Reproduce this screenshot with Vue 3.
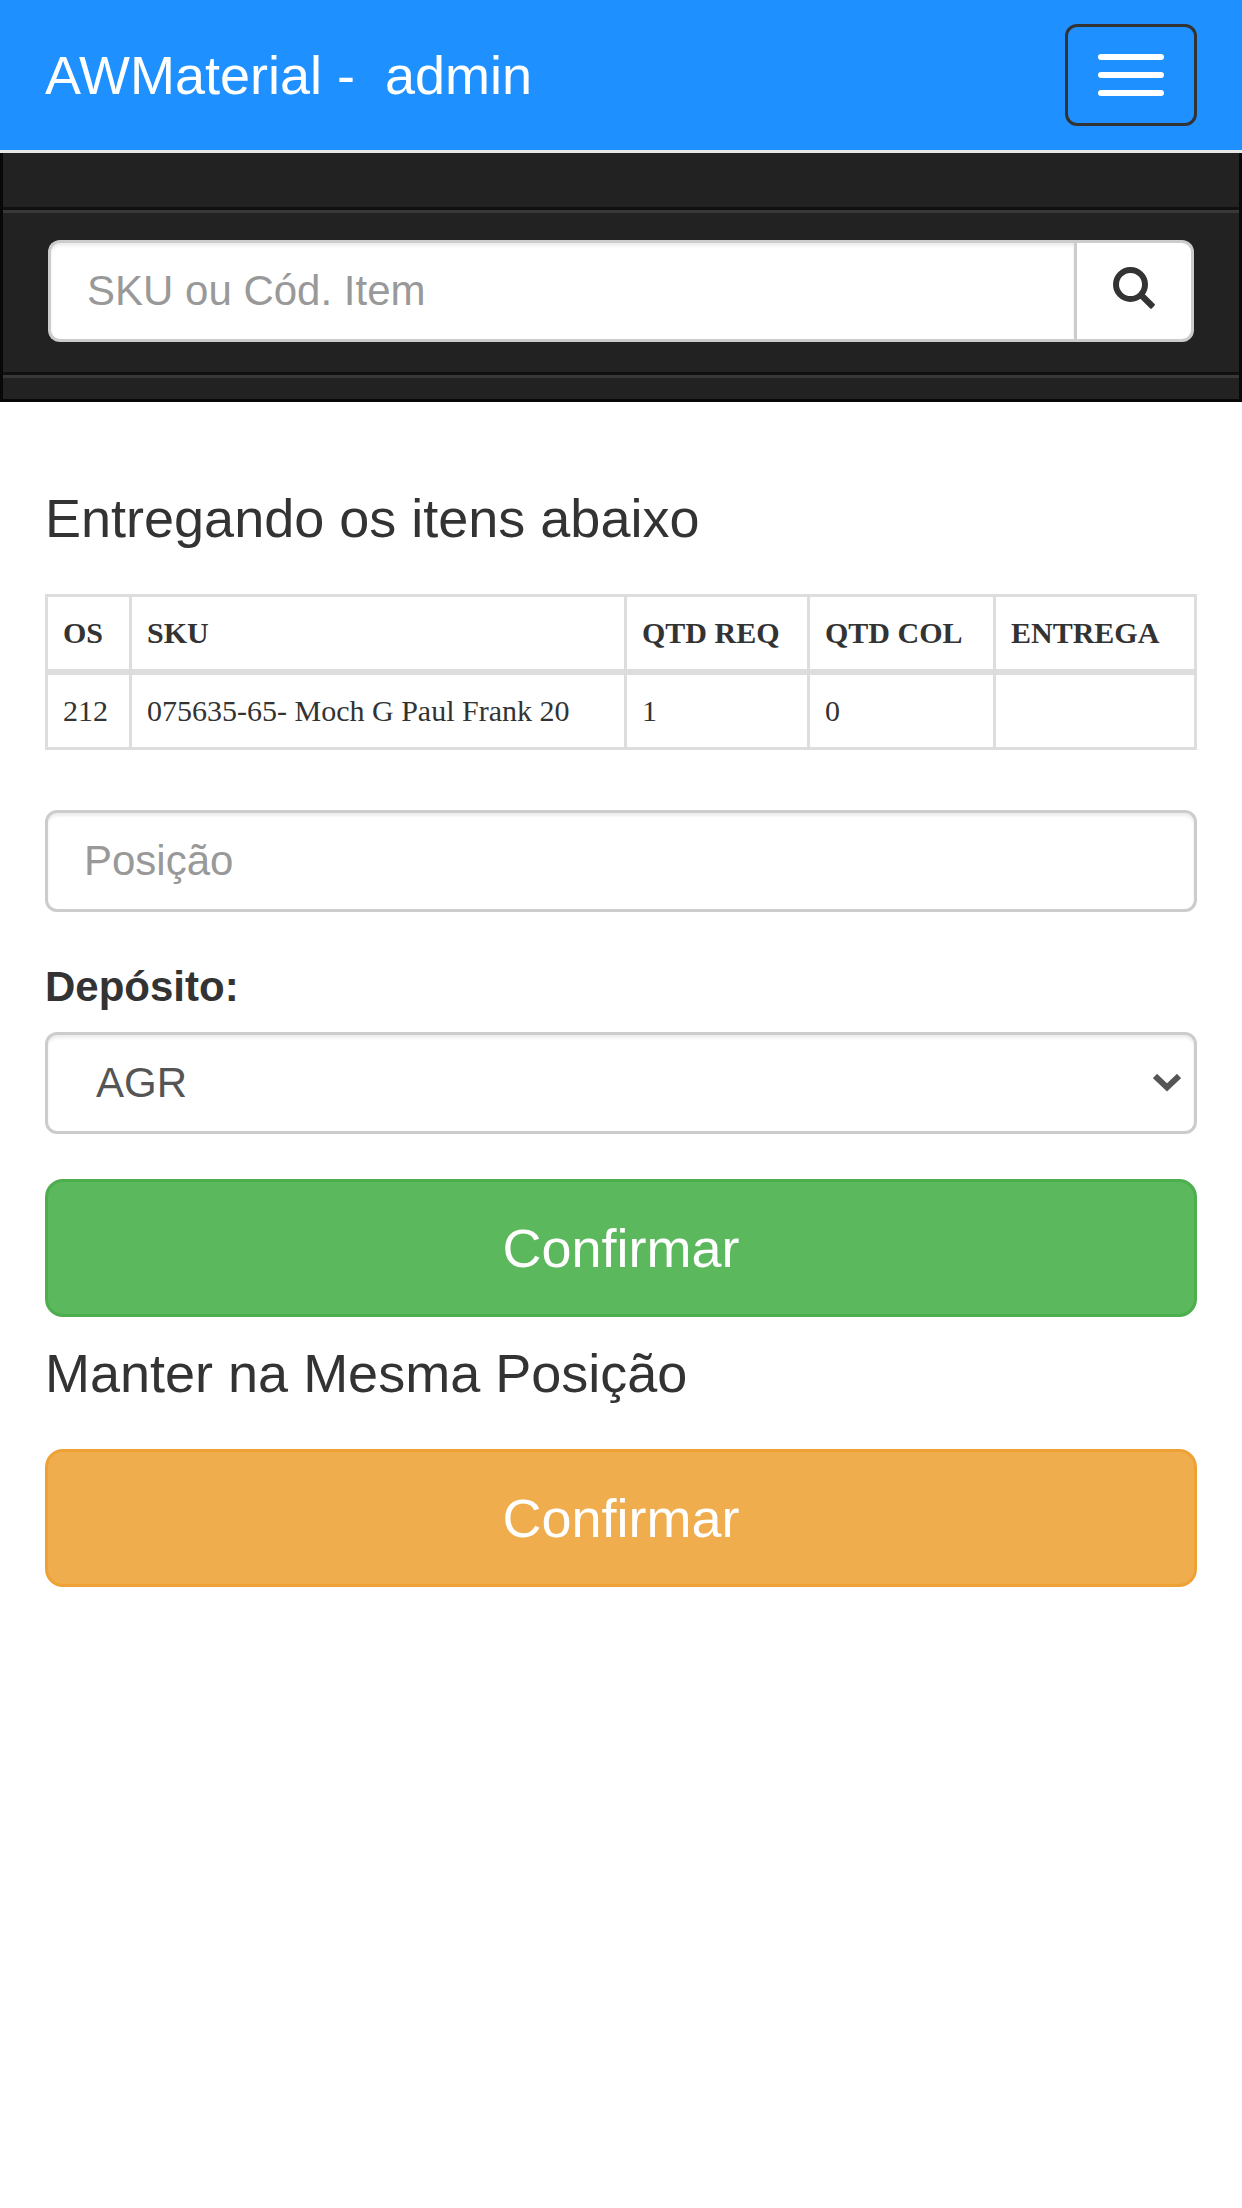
<script setup>
import { ref } from 'vue'

const search = ref('')
const position = ref('')
const warehouse = ref('AGR')
const warehouses = ['AGR']
const items = [
  { os: '212', sku: '075635-65- Moch G Paul Frank 20', requested: '1', collected: '0', delivery: '' }
]
</script>

<template>
  <div class="page">
    <header class="topbar">
      <a class="brand" href="#">AWMaterial -&nbsp; admin</a>
      <button class="toggle" type="button" aria-label="Menu">
        <span class="bar"></span>
        <span class="bar"></span>
        <span class="bar"></span>
      </button>
    </header>

    <nav class="search-panel">
      <form class="search-form" @submit.prevent>
        <input v-model="search" class="control search-input" type="text" placeholder="SKU ou Cód. Item" aria-label="SKU ou Cód. Item" />
        <button class="search-button" type="submit" aria-label="Buscar">
          <svg width="43" height="43" viewBox="0 0 43 43" aria-hidden="true">
            <circle cx="17.5" cy="17.5" r="14.5" fill="none" stroke="#333" stroke-width="6" />
            <path fill="#333" d="M31 26.4L41.6 37Q42.4 37.8 41.6 38.6L38.8 41.4Q38 42.2 37.2 41.4L26.4 30.8Z" />
          </svg>
        </button>
      </form>
    </nav>

    <main class="content">
      <h4 class="title">Entregando os itens abaixo</h4>

      <table class="items">
        <colgroup>
          <col class="col-os" />
          <col class="col-sku" />
          <col class="col-requested" />
          <col class="col-collected" />
          <col class="col-delivery" />
        </colgroup>
        <thead>
          <tr>
            <th scope="col">OS</th>
            <th scope="col">SKU</th>
            <th scope="col">QTD REQ</th>
            <th scope="col">QTD COL</th>
            <th scope="col">ENTREGA</th>
          </tr>
        </thead>
        <tbody>
          <tr v-for="item in items" :key="item.os">
            <td>{{ item.os }}</td>
            <td>{{ item.sku }}</td>
            <td>{{ item.requested }}</td>
            <td>{{ item.collected }}</td>
            <td>{{ item.delivery }}</td>
          </tr>
        </tbody>
      </table>

      <form class="delivery-form" @submit.prevent>
        <input v-model="position" class="control" type="text" placeholder="Posição" aria-label="Posição" />
        <label class="label" for="warehouse">Depósito:</label>
        <div class="select-box">
          <select id="warehouse" v-model="warehouse" class="control select">
            <option v-for="name in warehouses" :key="name" :value="name">{{ name }}</option>
          </select>
          <svg class="chevron" width="28" height="18" viewBox="0 0 28 18" fill="none" stroke="#555" stroke-width="6" aria-hidden="true">
            <path d="M2 2L14 13.4L26 2" />
          </svg>
        </div>
        <button class="button success" type="submit">Confirmar</button>
      </form>

      <h4 class="title">Manter na Mesma Posição</h4>
      <form @submit.prevent>
        <button class="button warning" type="submit">Confirmar</button>
      </form>
    </main>
  </div>
</template>

<style>
body {
  margin: 0;
  background: #fff;
}
</style>

<style scoped>
.page,
.page * {
  box-sizing: border-box;
}

.page {
  font-family: "Liberation Sans", Arial, sans-serif;
  font-size: 42px;
  line-height: 60px;
  color: #333;
}

.topbar {
  display: flex;
  align-items: center;
  justify-content: space-between;
  padding: 24px 45px;
  background: #1e90ff;
  border-bottom: 3px solid #e7e7e7;
}

.brand {
  color: #fff;
  font-size: 54px;
  text-decoration: none;
}

.toggle {
  display: flex;
  flex-direction: column;
  justify-content: center;
  gap: 12px;
  height: 102px;
  padding: 0 30px;
  background: transparent;
  border: 3px solid #333;
  border-radius: 12px;
}

.bar {
  width: 66px;
  height: 6px;
  border-radius: 3px;
  background: #fff;
}

.search-panel {
  padding: 54px 0 24px;
  background: #222;
  border: 3px solid #080808;
  border-top: 0;
}

.search-form {
  display: flex;
  padding: 30px 45px;
  border-top: 3px solid #101010;
  border-bottom: 3px solid #101010;
  box-shadow: inset 0 3px 0 rgba(255, 255, 255, 0.1), 0 3px 0 rgba(255, 255, 255, 0.1);
}

.control {
  display: block;
  width: 100%;
  height: 102px;
  margin: 0;
  padding: 0 36px;
  font: inherit;
  color: #555;
  background: #fff;
  border: 3px solid #ccc;
  border-radius: 12px;
  box-shadow: inset 0 3px 3px rgba(0, 0, 0, 0.075);
}

.control::placeholder {
  color: #999;
  opacity: 1;
}

.search-input {
  flex: 1;
  min-width: 0;
  border-right: 0;
  border-radius: 12px 0 0 12px;
}

.search-button {
  display: flex;
  justify-content: center;
  width: 120px;
  height: 102px;
  padding: 24px 0;
  background: #fff;
  border: 3px solid #ccc;
  border-radius: 0 12px 12px 0;
}

.content {
  padding: 60px 45px;
}

.title {
  margin: 26px 0 46px;
  font-size: 54px;
  font-weight: 400;
  line-height: 60px;
}

.items {
  width: 100%;
  margin-bottom: 60px;
  table-layout: fixed;
  border-collapse: collapse;
  border: 3px solid #ddd;
  font-family: "Liberation Serif", "Times New Roman", serif;
  font-size: 30px;
  line-height: 42px;
}

.col-os {
  width: 84px;
}

.col-sku {
  width: 495px;
}

.col-requested {
  width: 183px;
}

.col-collected {
  width: 186px;
}

.col-delivery {
  width: 201px;
}

.items th,
.items td {
  padding: 15px;
  border: 3px solid #ddd;
  text-align: left;
}

.items th {
  border-bottom-width: 6px;
}

.label {
  display: block;
  margin: 45px 0 15px;
  font-weight: 700;
}

.select-box {
  display: grid;
  align-items: center;
  margin-bottom: 45px;
}

.select-box > * {
  grid-area: 1 / 1;
}

.select {
  padding: 0 48px;
  appearance: none;
}

.chevron {
  justify-self: end;
  margin-right: 16px;
  pointer-events: none;
}

.button {
  display: block;
  width: 100%;
  height: 138px;
  margin: 0;
  padding: 0 48px;
  font-family: inherit;
  font-size: 54px;
  color: #fff;
  border: 3px solid;
  border-radius: 18px;
}

.success {
  background: #5cb85c;
  border-color: #4cae4c;
}

.warning {
  background: #f0ad4e;
  border-color: #eea236;
}
</style>
